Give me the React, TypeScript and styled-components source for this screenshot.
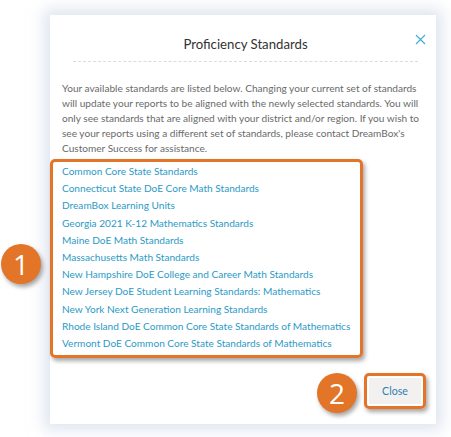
import { FC } from "react"
import styled, { createGlobalStyle } from "styled-components"

const GlobalStyle = createGlobalStyle`
    html, body {
        margin: 0;
        padding: 0;
        background: #fff;
        font-family: Lato, "Open Sans", sans-serif;
    }
`

const ORANGE = "#e27527"

const Page = styled.div`
    position: relative;
    width: 451px;
    height: 437px;
    padding: 15px 0 0 50px;
    box-sizing: border-box;
    overflow: hidden;
`

const Modal = styled.div`
    width: 386px;
    height: 409px;
    background: #fff;
    box-shadow: 0 0 14px 6px rgba(196, 208, 226, 0.55);
    box-sizing: border-box;
    padding: 0 12px;
    display: flex;
    flex-direction: column;

    & > * {
        flex-shrink: 0;
    }
`

const Header = styled.div`
    position: relative;
    margin: 0 6px 0 11px;
    height: 47px;
    border-bottom: 1px dashed #dcdcdc;
    display: flex;
    align-items: center;
    justify-content: center;
    padding-top: 12px;
    box-sizing: border-box;
`

const Title = styled.h2`
    margin: 0;
    font-size: 13.2px;
    font-weight: 400;
    color: #333;
`

const CloseIcon = styled.button`
    position: absolute;
    right: -8px;
    top: 19px;
    width: 11px;
    height: 11px;
    padding: 0;
    border: 0;
    background: none;
    display: flex;
`

const Intro = styled.p`
    margin: 19px 0 0;
    font-size: 10.1px;
    line-height: 15px;
    color: #6a6a6a;
`

const StandardsList = styled.ul`
    list-style: none;
    margin: 3px 0 0 -12px;
    padding: 1px 0 3px 9px;
    width: 313px;
    box-sizing: border-box;
    border: 3px solid ${ORANGE};
    border-radius: 5px;
    box-shadow: 2px 3px 4px rgba(0, 0, 0, 0.35);
`

const StandardItem = styled.li`
    font-size: 10.1px;
    line-height: 17.2px;
    color: #2b9ac6;
    cursor: pointer;
`

const Footer = styled.div`
    margin-top: auto;
    display: flex;
    justify-content: flex-end;
    padding-bottom: 15px;
    margin-right: -2px;
`

const ButtonFrame = styled.div`
    border: 3px solid ${ORANGE};
    border-radius: 5px;
    padding: 2px;
    box-shadow: 2px 3px 4px rgba(0, 0, 0, 0.35);
`

const CloseButton = styled.button`
    width: 52px;
    height: 26px;
    border: 0;
    background: #f2f1ef;
    color: #2f7db3;
    font-family: inherit;
    font-size: 10.6px;
    padding: 0;
`

const Badge = styled.div<{ $x: number; $y: number }>`
    position: absolute;
    left: ${p => p.$x}px;
    top: ${p => p.$y}px;
    width: 40px;
    height: 40px;
    border-radius: 50%;
    background: ${ORANGE};
    color: #fff;
    font-family: "Open Sans", sans-serif;
    font-size: 28px;
    line-height: 40px;
    text-align: center;
    box-shadow: 2px 3px 4px rgba(0, 0, 0, 0.35);
`

const standards = [
    "Common Core State Standards",
    "Connecticut State DoE Core Math Standards",
    "DreamBox Learning Units",
    "Georgia 2021 K-12 Mathematics Standards",
    "Maine DoE Math Standards",
    "Massachusetts Math Standards",
    "New Hampshire DoE College and Career Math Standards",
    "New Jersey DoE Student Learning Standards: Mathematics",
    "New York Next Generation Learning Standards",
    "Rhode Island DoE Common Core State Standards of Mathematics",
    "Vermont DoE Common Core State Standards of Mathematics",
]

const App: FC = () => {
    return (
        <>
            <GlobalStyle />
            <Page>
                <Modal>
                    <Header>
                        <Title>Proficiency Standards</Title>
                        <CloseIcon aria-label="Close">
                            <svg width="11" height="11" viewBox="0 0 11 11">
                                <path d="M1 1 L10 10 M10 1 L1 10" stroke="#45aed6" strokeWidth="1.2" fill="none" />
                            </svg>
                        </CloseIcon>
                    </Header>
                    <Intro>
                        Your available standards are listed below. Changing your current set of standards
                        will update your reports to be aligned with the newly selected standards. You will
                        only see standards that are aligned with your district and/or region. If you wish to
                        see your reports using a different set of standards, please contact DreamBox's
                        Customer Success for assistance.
                    </Intro>
                    <StandardsList>
                        {standards.map(s => (
                            <StandardItem key={s}>{s}</StandardItem>
                        ))}
                    </StandardsList>
                    <Footer>
                        <ButtonFrame>
                            <CloseButton>Close</CloseButton>
                        </ButtonFrame>
                    </Footer>
                </Modal>
                <Badge $x={1} $y={244}>1</Badge>
                <Badge $x={317} $y={373}>2</Badge>
            </Page>
        </>
    )
}

export default App
